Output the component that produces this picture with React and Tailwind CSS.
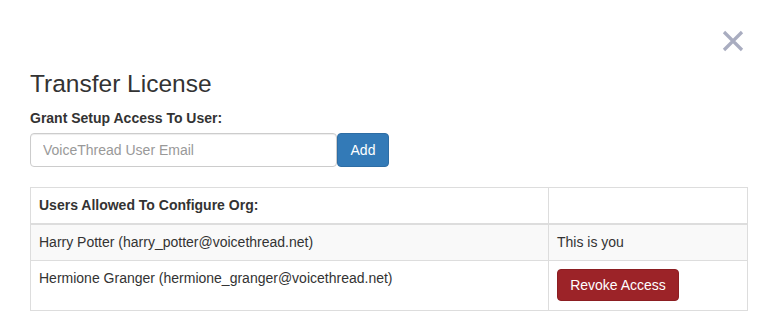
import { useState } from 'react'

const users = [
  { name: 'Harry Potter', email: 'harry_potter@voicethread.net', self: true },
  { name: 'Hermione Granger', email: 'hermione_granger@voicethread.net', self: false },
]

function CloseIcon() {
  return (
    <svg width="22" height="22" viewBox="0 0 22 22" aria-hidden="true">
      <path d="M2 2 L20 20 M20 2 L2 20" stroke="#a9adc0" strokeWidth="3.2" strokeLinecap="butt" />
    </svg>
  )
}

export default function App() {
  const [email, setEmail] = useState('')

  return (
    <div className="h-[333px] w-[781px] overflow-hidden bg-white font-['Liberation_Sans',Arial,sans-serif] text-[14px] text-[#333]">
      <div className="flex justify-end pr-[37px] pt-[30px]">
        <button type="button" className="h-[22px] w-[22px]">
          <CloseIcon />
        </button>
      </div>

      <div className="px-[30px]">
        <h2 className="mt-[19px] text-[24.5px] leading-[26px] font-normal">Transfer License</h2>
        <label className="mt-[11px] block font-bold leading-[20px]">Grant Setup Access To User:</label>

        <div className="mt-[5px] flex">
          <input
            value={email}
            onChange={(e) => setEmail(e.target.value)}
            placeholder="VoiceThread User Email"
            className="h-[34px] w-[307px] rounded-[4px] border border-[#ccc] px-[12px] text-[14px] text-[#555] shadow-[inset_0_1px_1px_rgba(0,0,0,0.075)] outline-none placeholder:text-[#999]"
          />
          <button
            type="button"
            className="h-[34px] w-[52px] rounded-[4px] border border-[#2e6da4] bg-[#337ab7] text-[14px] text-white"
          >
            Add
          </button>
        </div>

        <div className="mt-[20px] w-[718px] border-l border-t border-[#ddd]">
          <div className="flex">
            <div className="h-[37px] w-[518px] border-b-2 border-r border-[#ddd] px-[8px] py-[8px] font-bold leading-[19px]">
              Users Allowed To Configure Org:
            </div>
            <div className="h-[37px] w-[199px] border-b-2 border-r border-[#ddd]" />
          </div>
          {users.map((user, i) => (
            <div key={user.email} className={`flex ${i % 2 === 0 ? 'bg-[#f9f9f9]' : 'bg-white'}`}>
              <div
                className={`${user.self ? 'h-[36px]' : 'h-[50px]'} w-[518px] border-b border-r border-[#ddd] px-[8px] py-[8px] leading-[19px]`}
              >
                {user.name} ({user.email})
              </div>
              <div
                className={`${user.self ? 'h-[36px]' : 'h-[50px]'} w-[199px] border-b border-r border-[#ddd] px-[8px] py-[8px] leading-[19px]`}
              >
                {user.self ? (
                  'This is you'
                ) : (
                  <button
                    type="button"
                    className="h-[32px] w-[122px] rounded-[4px] border border-[#8c1e22] bg-[#9c2328] text-[14px] text-white"
                  >
                    Revoke Access
                  </button>
                )}
              </div>
            </div>
          ))}
        </div>
      </div>
    </div>
  )
}
